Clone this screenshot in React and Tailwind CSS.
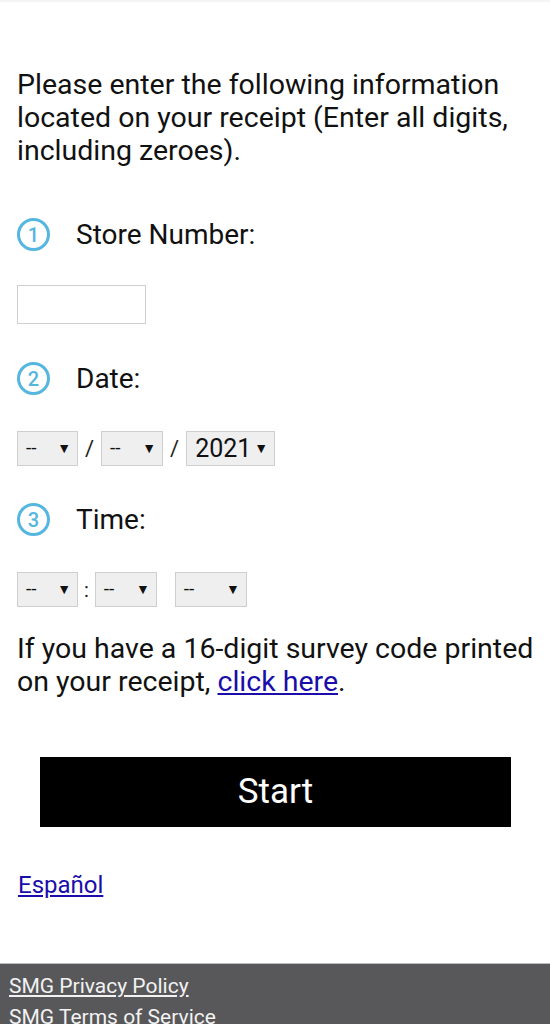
const font = { fontFamily: 'Roboto, "Liberation Sans", sans-serif' };

function StepBadge({ n }) {
  return (
    <span className="flex h-[33px] w-[33px] shrink-0 items-center justify-center rounded-full border-[3px] border-[#55b6e0] text-[20px] font-medium leading-none text-[#55b6e0]">
      {n}
    </span>
  );
}

function Step({ n, label }) {
  return (
    <div className="flex items-center gap-[26px]">
      <StepBadge n={n} />
      <span className="text-[28px] leading-[33px] text-[#111]">{label}</span>
    </div>
  );
}

function FakeSelect({ value, width, big }) {
  return (
    <div
      className={`flex h-[35px] items-center justify-between border border-[#cfcfcf] bg-[#efefef] pl-[8px] pr-[6px] text-[#111] ${width}`}
    >
      <span className={big ? 'text-[25px]' : 'text-[19px]'}>{value}</span>
      <span className="text-[14px]">▼</span>
    </div>
  );
}

export default function App() {
  return (
    <div style={font} className="flex min-h-[1024px] flex-col bg-white">
      <div className="h-[2px] bg-[#f4f4f4]" />
      <div className="flex flex-1 flex-col pl-[17px] pr-[8px] pt-[66px]">
        <p className="text-[28.5px] leading-[33px] text-[#111]">
          Please enter the following information located on your receipt (Enter all digits, including zeroes).
        </p>

        <div className="mt-[51px]">
          <Step n="1" label="Store Number:" />
        </div>
        <div className="mt-[34px] h-[39px] w-[129px] border border-[#cfcfcf] bg-white" />

        <div className="mt-[38px]">
          <Step n="2" label="Date:" />
        </div>
        <div className="mt-[36px] flex items-center">
          <FakeSelect value="--" width="w-[61px]" />
          <span className="mx-[7px] text-[22px] text-[#222]">/</span>
          <FakeSelect value="--" width="w-[62px]" />
          <span className="mx-[7px] text-[22px] text-[#222]">/</span>
          <FakeSelect value="2021" width="w-[89px]" big />
        </div>

        <div className="mt-[37px]">
          <Step n="3" label="Time:" />
        </div>
        <div className="mt-[36px] flex items-center">
          <FakeSelect value="--" width="w-[61px]" />
          <span className="mx-[6px] text-[20px] text-[#222]">:</span>
          <FakeSelect value="--" width="w-[62px]" />
          <span className="w-[18px]" />
          <FakeSelect value="--" width="w-[72px]" />
        </div>

        <p className="mt-[25px] text-[28.5px] leading-[33px] text-[#111]">
          If you have a 16-digit survey code printed on your receipt,{' '}
          <a href="#" className="text-[#1a0dab] underline">click here</a>.
        </p>

        <button className="ml-[23px] mr-[31px] mt-[59px] h-[70px] bg-black text-[35px] text-white">
          Start
        </button>

        <a href="#" className="mt-[40px] self-start pl-[1px] text-[24px] text-[#1a0dab] underline">
          Español
        </a>
      </div>

      <footer className="mt-auto h-[61px] border-t border-[#bdbdbd] bg-[#58585a] px-[9px] pt-[7px]">
        <a href="#" className="block text-[21px] leading-[31px] text-[#f2f2f2] underline">SMG Privacy Policy</a>
        <a href="#" className="block text-[21px] leading-[31px] text-[#f2f2f2]">SMG Terms of Service</a>
      </footer>
    </div>
  );
}
